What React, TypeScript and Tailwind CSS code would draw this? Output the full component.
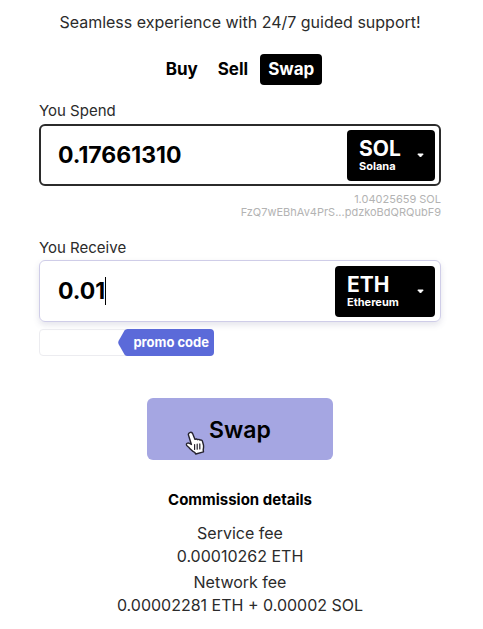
import { useState } from "react";

type Token = { symbol: string; name: string };

function TokenSelect({ id, token, width }: { id: string; token: Token; width: string }) {
  return (
    <div className={`grid h-[51px] shrink-0 grid-cols-1 grid-rows-1 rounded bg-black text-white ${width}`}>
      <select
        id={id}
        aria-label={`${token.name} currency`}
        defaultValue={token.symbol}
        className="col-start-1 row-start-1 h-full w-full cursor-pointer appearance-none bg-transparent pb-3 pl-3 text-[21px] font-bold outline-none"
      >
        <option value={token.symbol}>{token.symbol}</option>
      </select>
      <span className="pointer-events-none col-start-1 row-start-1 self-end pb-2 pl-3 text-[11px] leading-[14px] font-bold">
        {token.name}
      </span>
      <svg
        className="pointer-events-none col-start-1 row-start-1 mr-[11px] self-center justify-self-end"
        width="7"
        height="5"
        viewBox="0 0 7 5"
        aria-hidden="true"
      >
        <path d="M0.8 1h5.4L3.5 4z" fill="#fff" stroke="#fff" strokeWidth="1" strokeLinejoin="round" />
      </svg>
    </div>
  );
}

function HandCursor() {
  return (
    <svg className="absolute top-[33px] left-[38px]" width="20" height="24" viewBox="0 0 20 24" aria-hidden="true">
      <path
        d="M4.800 1.600c1.200-.5 2.400 0 2.900 1.200l2.300 5.600c.7-.7 2-.6 2.600.3.700-.6 1.900-.4 2.400.4.900-.4 2.100 0 2.400 1l1 3.600c.5 2 0 3.500-.2 5.200l.3 1.900-7.700 2.200-1.100-1.700c-2.100-.8-4-3-6.300-5.200-.9-.9-2.300-1.800-2-2.900.3-1.300 2-1.400 3.100-.8l1.900 1.100L3.600 4.500c-.5-1.200 0-2.400 1.200-2.900z"
        fill="#fff"
        stroke="#25222e"
        strokeWidth="1.400"
        strokeLinejoin="round"
      />
      <path d="M9.600 13.500v5M12.200 13.200v5M14.800 12.900v5" stroke="#25222e" strokeWidth="1.200" strokeLinecap="round" />
    </svg>
  );
}

export default function App() {
  const [spend, setSpend] = useState("0.17661310");
  const [receive, setReceive] = useState("0.01");
  const [promo, setPromo] = useState("");

  return (
    <main className="bg-white pt-[10px] pr-[42px] pb-3 pl-[39px] font-['Inter',sans-serif] text-[15px] leading-6 text-[#2b2b2b]">
      <p className="text-center text-base">Seamless experience with 24/7 guided support!</p>

      <nav className="mt-5 flex justify-center gap-1 text-[17px] leading-[31px] font-bold text-black">
        <button type="button" className="px-2">Buy</button>
        <button type="button" className="px-2">Sell</button>
        <button type="button" aria-current="page" className="rounded bg-black px-2 text-white">Swap</button>
      </nav>

      <form onSubmit={(e) => e.preventDefault()}>
        <label htmlFor="spend" className="mt-[14px] block">You Spend</label>
        <div className="mt-px flex h-[62px] items-center rounded-md border-2 border-[#2b2b2b] pr-1 pl-[17px]">
          <input
            id="spend"
            value={spend}
            onChange={(e) => setSpend(e.target.value)}
            className="min-w-0 flex-1 bg-transparent text-[23px] leading-8 font-bold text-black outline-none"
          />
          <TokenSelect id="spend-token" token={{ symbol: "SOL", name: "Solana" }} width="w-[88px]" />
        </div>
        <div className="mt-[7px] text-right text-[11px] leading-[13px] text-[#b3b3b3]">
          <p>1.04025659 SOL</p>
          <p>FzQ7wEBhAv4PrS...pdzkoBdQRQubF9</p>
        </div>

        <label htmlFor="receive" className="mt-[17px] block">You Receive</label>
        <div className="flex h-[62px] items-center rounded-md border border-[#cfcde8] pr-[5px] pl-[18px] shadow-[0_3px_6px_rgba(90,90,130,0.16)]">
          <div className="flex min-w-0 flex-1 items-center">
            <input
              id="receive"
              value={receive}
              onChange={(e) => setReceive(e.target.value)}
              className="field-sizing-content max-w-full bg-transparent text-[23px] leading-8 font-bold text-black caret-transparent outline-none"
            />
            <span className="h-7 w-px bg-black" />
          </div>
          <TokenSelect id="receive-token" token={{ symbol: "ETH", name: "Ethereum" }} width="w-[100px]" />
        </div>

        <div className="mt-[7px] flex h-[27px] w-[175px] rounded border border-[#ececf0]">
          <input
            aria-label="Promo code"
            value={promo}
            onChange={(e) => setPromo(e.target.value)}
            className="min-w-0 flex-1 bg-transparent px-2 text-sm outline-none"
          />
          <button
            type="button"
            className="-my-px -mr-px flex w-24 items-center text-[13px] font-bold text-white"
          >
            <svg className="shrink-0" width="10" height="27" viewBox="0 0 10 27" aria-hidden="true">
              <path d="M10 0H9.500Q7.500 0 6.500 1.500L.8 11.500Q-.3 13.500.8 15.500L6.500 25.500Q7.500 27 9.500 27H10z" fill="#5b6ad9" />
            </svg>
            <span className="h-[27px] flex-1 rounded-r bg-[#5b6ad9] pr-[5px] text-right leading-[27px] whitespace-nowrap">promo code</span>
          </button>
        </div>

        <button
          type="submit"
          className="relative mx-auto mt-[42px] block h-[62px] w-[186px] rounded-md bg-[#a5a6e2] pt-0.5 text-[23px] font-semibold text-black"
        >
          Swap
          <HandCursor />
        </button>
      </form>

      <section className="mt-7 text-center">
        <h2 className="font-bold text-black">Commission details</h2>
        <dl className="mt-[10px] text-base leading-[23px]">
          <dt>Service fee</dt>
          <dd>0.00010262 ETH</dd>
          <dt className="mt-[3px]">Network fee</dt>
          <dd>0.00002281 ETH + 0.00002 SOL</dd>
        </dl>
      </section>
    </main>
  );
}
